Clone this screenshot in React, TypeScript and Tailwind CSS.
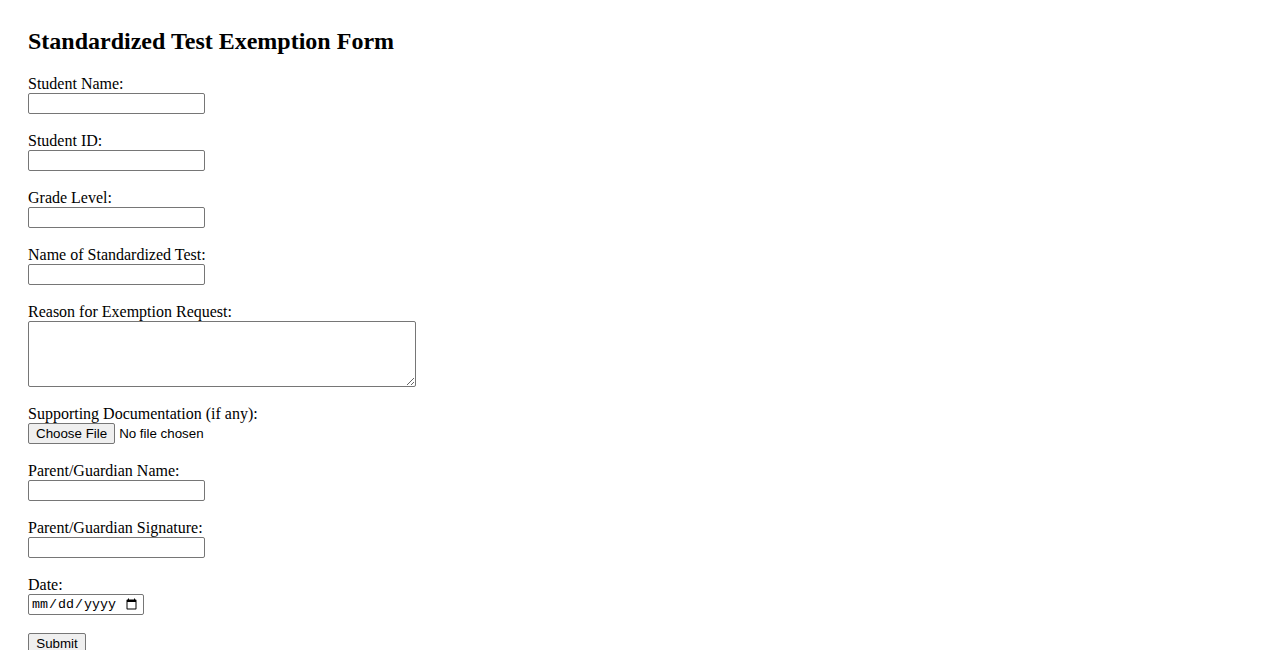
import React from 'react'

const serif = "font-['Liberation_Serif','Times_New_Roman',serif]"
const textInput =
  'block w-[177px] h-[21px] border border-[#767676] rounded-[2px] bg-white px-[2px] py-[1px] text-[13.33px] font-[Arial,"Liberation_Sans",sans-serif] outline-none'

function Field({ label, children }: { label: string; children: React.ReactNode }) {
  return (
    <div className="flex flex-col items-start">
      <label className="h-[18px] leading-[18px] text-[16px]">{label}</label>
      {children}
    </div>
  )
}

export default function App() {
  return (
    <div className={`min-h-screen bg-white text-black px-[28px] pt-[27px] ${serif}`}>
      <h2 className="text-[24px] font-bold leading-[28px] mb-[20px]">Standardized Test Exemption Form</h2>

      <form className="flex flex-col gap-[18px]" onSubmit={e => e.preventDefault()}>
        <Field label="Student Name:">
          <input type="text" className={textInput} />
        </Field>
        <Field label="Student ID:">
          <input type="text" className={textInput} />
        </Field>
        <Field label="Grade Level:">
          <input type="text" className={textInput} />
        </Field>
        <Field label="Name of Standardized Test:">
          <input type="text" className={textInput} />
        </Field>
        <Field label="Reason for Exemption Request:">
          <textarea className="block w-[388px] h-[66px] border border-[#767676] rounded-[2px] bg-white px-[2px] py-[2px] text-[13.33px] font-['Liberation_Mono',monospace] outline-none resize" />
        </Field>
        <Field label="Supporting Documentation (if any):">
          <div className="flex items-center h-[21px] text-[13.33px] font-['Liberation_Sans',Arial,sans-serif]">
            <button
              type="button"
              className="h-[21px] px-[7px] bg-[#efefef] border border-[#767676] rounded-[2px] leading-none"
            >
              Choose File
            </button>
            <span className="ml-[4px]">No file chosen</span>
          </div>
        </Field>
        <Field label="Parent/Guardian Name:">
          <input type="text" className={textInput} />
        </Field>
        <Field label="Parent/Guardian Signature:">
          <input type="text" className={textInput} />
        </Field>
        <Field label="Date:">
          <input
            type="date"
            className="block w-[116px] h-[21px] border border-[#767676] rounded-[2px] bg-white pl-[2px] pr-[3px] text-[13.33px] font-['Liberation_Mono',monospace] outline-none"
          />
        </Field>
        <div className="-mt-[2px]">
          <button
            type="submit"
            className="h-[21px] w-[58px] bg-[#efefef] border border-[#767676] rounded-[2px] text-[13.33px] font-['Liberation_Sans',Arial,sans-serif] leading-none"
          >
            Submit
          </button>
        </div>
      </form>
    </div>
  )
}
